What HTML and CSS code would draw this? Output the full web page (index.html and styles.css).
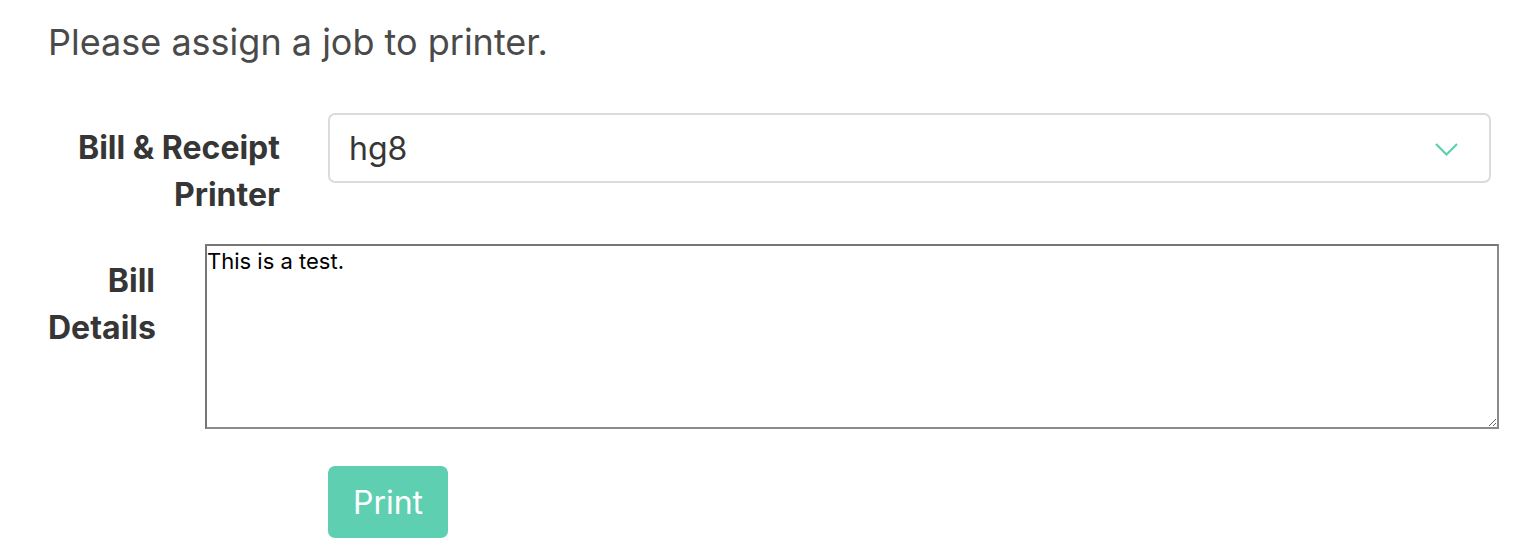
FILE: index.html
```html
<!DOCTYPE html>
<html>
<head>
<meta charset="utf-8">
<link rel="stylesheet" href="styles.css">
</head>
<body>
<div class="page">
  <h2 class="subtitle">Please assign a job to printer.</h2>
  <div class="field field-printer">
    <label class="field-label label-printer">Bill &amp; Receipt Printer</label>
    <div class="select-box">
      <span class="select-value">hg8</span>
      <svg class="chevron" width="23" height="13" viewBox="0 0 23 13"><path d="M1 1 L11.5 11.5 L22 1" fill="none" stroke="#5ecfb1" stroke-width="2.2"/></svg>
    </div>
  </div>
  <div class="field field-details">
    <label class="field-label label-details">Bill Details</label>
    <textarea class="details">This is a test.</textarea>
  </div>
  <div class="actions">
    <button class="btn-print">Print</button>
  </div>
</div>
</body>
</html>
```
FILE: styles.css
```css
html, body {
  margin: 0;
  padding: 0;
  background: #ffffff;
}
.page {
  font-family: Inter, "Noto Sans", sans-serif;
  padding: 18px 0 0 48px;
  width: 1451px;
}
.subtitle {
  margin: 0;
  font-size: 36px;
  font-weight: 400;
  line-height: 48px;
  color: #4a4a4a;
}
.field {
  display: flex;
  align-items: flex-start;
}
.field-printer {
  margin-top: 47px;
  gap: 48px;
}
.field-label {
  font-weight: 700;
  font-size: 32px;
  line-height: 47px;
  color: #363636;
  text-align: right;
}
.label-printer {
  width: 232px;
  padding-top: 11px;
}
.select-box {
  flex: 0 0 1163px;
  box-sizing: border-box;
  height: 70px;
  border: 2px solid #dbdbdb;
  border-radius: 7px;
  display: flex;
  align-items: center;
  justify-content: space-between;
  padding: 0 31px 0 19px;
}
.select-value {
  font-size: 32px;
  color: #363636;
}
.chevron {
  display: block;
  margin-top: 2px;
}
.field-details {
  margin-top: 26px;
  gap: 50px;
}
.label-details {
  width: 107px;
  padding-top: 13px;
}
.details {
  flex: 0 0 1294px;
  box-sizing: border-box;
  height: 185px;
  margin: 0;
  border: 2px solid #8a8a8a;
  border-top-color: #767676;
  border-left-color: #767676;
  padding: 2px 2px 2px 0;
  font-family: Inter, "Noto Sans", sans-serif;
  font-size: 22px;
  color: #000;
  resize: both;
}
.actions {
  padding: 37px 0 0 280px;
}
.btn-print {
  display: block;
  width: 120px;
  height: 72px;
  border: none;
  border-radius: 7px;
  background: #5ecfb1;
  color: #ffffff;
  font-family: Inter, "Noto Sans", sans-serif;
  font-size: 32px;
  padding: 0;
}
```
